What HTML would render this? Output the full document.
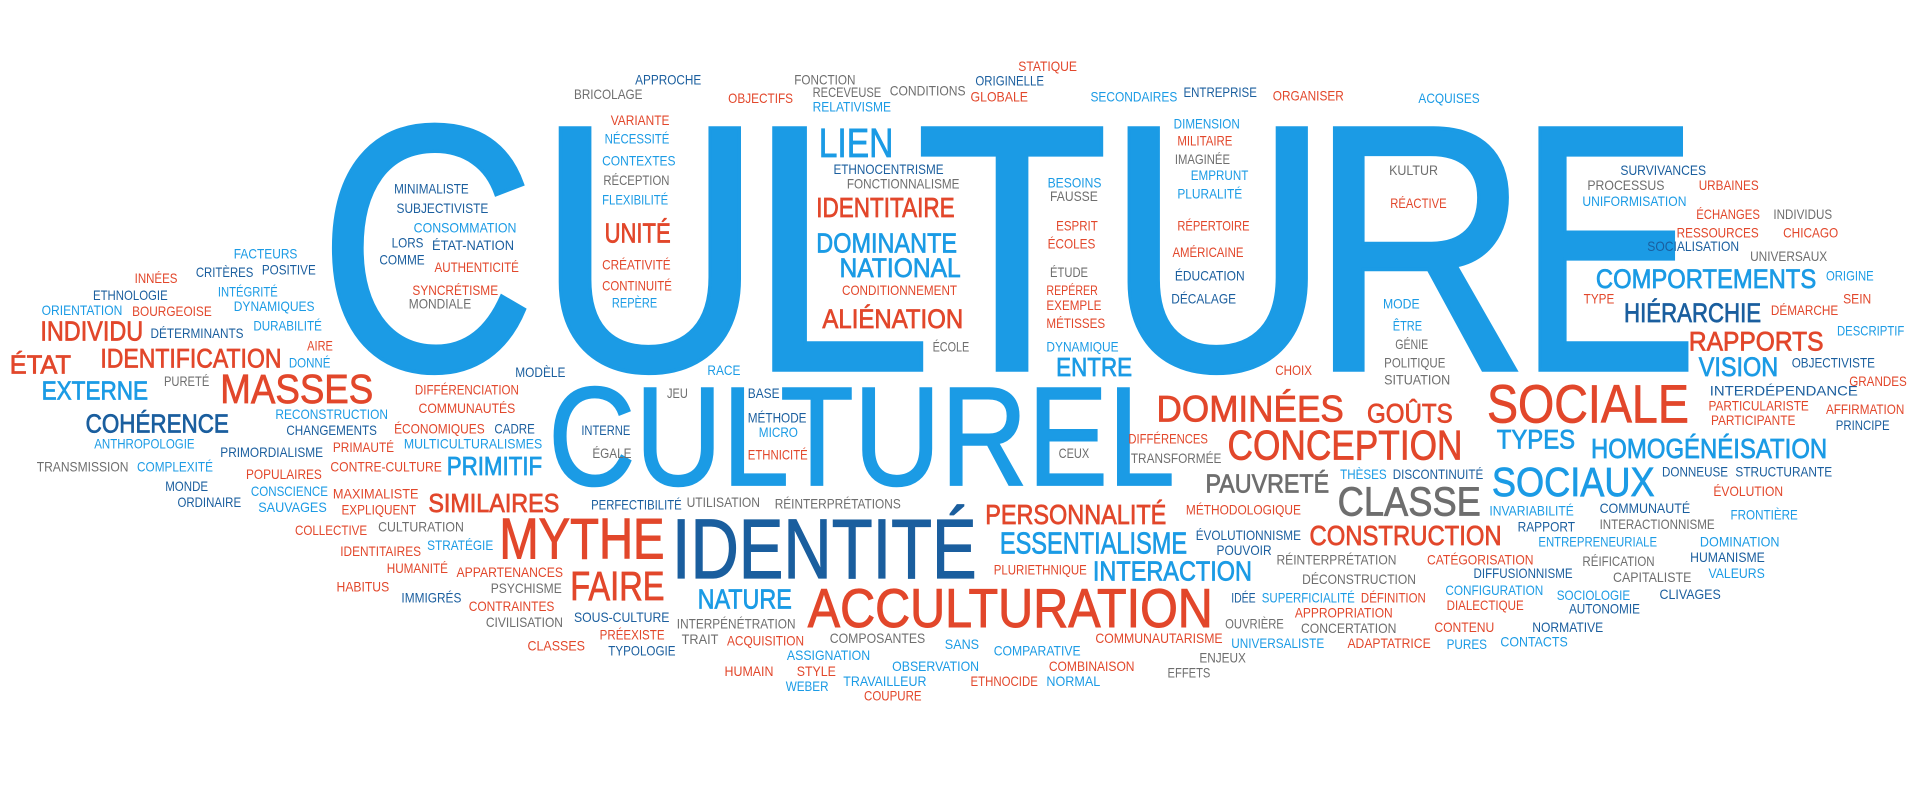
<!DOCTYPE html>
<html><head><meta charset="utf-8"><style>
html,body{margin:0;padding:0;background:#fff;width:1919px;height:790px;overflow:hidden}
svg{display:block}
text{font-family:"Liberation Sans",sans-serif;font-size:11.5px}
.b{fill:#1b9be5}.d{fill:#1a5e9e}.r{fill:#e2472b}.g{fill:#6e6e6e}
.m{stroke-width:.6px}.b.m{stroke:#1b9be5}.d.m{stroke:#1a5e9e}.r.m{stroke:#e2472b}.g.m{stroke:#6e6e6e}
.big{font-size:287px;stroke:#1b9be5;stroke-width:3px}
.cl{font-size:115px;stroke:#1b9be5;stroke-width:1.5px}
</style></head><body>
<svg width="1919" height="790" viewBox="0 0 1568 645" preserveAspectRatio="none">
<g>
<text class="b big" x="260" y="302" textLength="178" lengthAdjust="spacingAndGlyphs">C</text>
<text class="b big" x="438" y="302" textLength="186" lengthAdjust="spacingAndGlyphs">U</text>
<text class="b big" x="610" y="302" textLength="152" lengthAdjust="spacingAndGlyphs">L</text>
<text class="b big" x="748" y="302" textLength="158" lengthAdjust="spacingAndGlyphs">T</text>
<text class="b big" x="903" y="302" textLength="184" lengthAdjust="spacingAndGlyphs">U</text>
<text class="b big" x="1070" y="302" textLength="180" lengthAdjust="spacingAndGlyphs">R</text>
<text class="b big" x="1240" y="302" textLength="148" lengthAdjust="spacingAndGlyphs">E</text>
<text class="b cl" x="448" y="396" textLength="512" lengthAdjust="spacingAndGlyphs">CULTUREL</text>
<text class="d" x="549" y="472" style="font-size:69px;stroke:#1a5e9e;stroke-width:1px" textLength="249" lengthAdjust="spacingAndGlyphs">IDENTITÉ</text>
<text class="r" x="660" y="512" style="font-size:45px;stroke:#e2472b;stroke-width:.8px" textLength="331" lengthAdjust="spacingAndGlyphs">ACCULTURATION</text>
<text class="r" x="408" y="456" style="font-size:47px;stroke:#e2472b;stroke-width:.8px" textLength="135" lengthAdjust="spacingAndGlyphs">MYTHE</text>
<text class="r m" x="466" y="490" style="font-size:33px" textLength="77" lengthAdjust="spacingAndGlyphs">FAIRE</text>
<text class="r m" x="1215" y="345" style="font-size:44px" textLength="165" lengthAdjust="spacingAndGlyphs">SOCIALE</text>
<text class="r m" x="945" y="344" style="font-size:30px" textLength="153" lengthAdjust="spacingAndGlyphs">DOMINÉES</text>
<text class="r m" x="1117" y="345" style="font-size:22px" textLength="70" lengthAdjust="spacingAndGlyphs">GOÛTS</text>
<text class="r m" x="1003" y="375" style="font-size:34px" textLength="192" lengthAdjust="spacingAndGlyphs">CONCEPTION</text>
<text class="g m" x="1093" y="421" style="font-size:33px" textLength="117" lengthAdjust="spacingAndGlyphs">CLASSE</text>
<text class="b m" x="1219" y="405" style="font-size:33px" textLength="133" lengthAdjust="spacingAndGlyphs">SOCIAUX</text>
<text class="g m" x="985" y="402" style="font-size:21px" textLength="101" lengthAdjust="spacingAndGlyphs">PAUVRETÉ</text>
<text class="b m" x="1300" y="374" style="font-size:23px" textLength="193" lengthAdjust="spacingAndGlyphs">HOMOGÉNÉISATION</text>
<text class="b m" x="1223" y="366" style="font-size:22px" textLength="64" lengthAdjust="spacingAndGlyphs">TYPES</text>
<text class="r m" x="805" y="428" style="font-size:23px" textLength="148" lengthAdjust="spacingAndGlyphs">PERSONNALITÉ</text>
<text class="r m" x="1070" y="445" style="font-size:23px" textLength="157" lengthAdjust="spacingAndGlyphs">CONSTRUCTION</text>
<text class="b m" x="817" y="452" style="font-size:24.7px" textLength="153" lengthAdjust="spacingAndGlyphs">ESSENTIALISME</text>
<text class="b m" x="893" y="474" style="font-size:23px" textLength="130" lengthAdjust="spacingAndGlyphs">INTERACTION</text>
<text class="b m" x="570" y="497" style="font-size:23px" textLength="77" lengthAdjust="spacingAndGlyphs">NATURE</text>
<text class="r m" x="350" y="418" style="font-size:21px" textLength="107" lengthAdjust="spacingAndGlyphs">SIMILAIRES</text>
<text class="b m" x="365" y="388" style="font-size:21px" textLength="78" lengthAdjust="spacingAndGlyphs">PRIMITIF</text>
<text class="r m" x="180" y="329" style="font-size:33px" textLength="125" lengthAdjust="spacingAndGlyphs">MASSES</text>
<text class="d m" x="70" y="353" style="font-size:21px" textLength="117" lengthAdjust="spacingAndGlyphs">COHÉRENCE</text>
<text class="b m" x="34" y="326" style="font-size:21px" textLength="87" lengthAdjust="spacingAndGlyphs">EXTERNE</text>
<text class="r m" x="82" y="300" style="font-size:22px" textLength="148" lengthAdjust="spacingAndGlyphs">IDENTIFICATION</text>
<text class="r m" x="8" y="305" style="font-size:21px" textLength="50" lengthAdjust="spacingAndGlyphs">ÉTAT</text>
<text class="r m" x="33" y="278" style="font-size:23px" textLength="84" lengthAdjust="spacingAndGlyphs">INDIVIDU</text>
<text class="b m" x="863" y="307" style="font-size:21px" textLength="62" lengthAdjust="spacingAndGlyphs">ENTRE</text>
<text class="b m" x="1388" y="307" style="font-size:22px" textLength="65" lengthAdjust="spacingAndGlyphs">VISION</text>
<text class="r m" x="1380" y="286" style="font-size:22px" textLength="110" lengthAdjust="spacingAndGlyphs">RAPPORTS</text>
<text class="d m" x="1327" y="263" style="font-size:22px" textLength="112" lengthAdjust="spacingAndGlyphs">HIÉRARCHIE</text>
<text class="b m" x="1304" y="235" style="font-size:22px" textLength="180" lengthAdjust="spacingAndGlyphs">COMPORTEMENTS</text>
<text class="r m" x="672" y="268" style="font-size:22px" textLength="115" lengthAdjust="spacingAndGlyphs">ALIÉNATION</text>
<text class="b m" x="686" y="226" style="font-size:22px" textLength="99" lengthAdjust="spacingAndGlyphs">NATIONAL</text>
<text class="b m" x="667" y="206" style="font-size:23px" textLength="115" lengthAdjust="spacingAndGlyphs">DOMINANTE</text>
<text class="r m" x="494" y="198" style="font-size:23px" textLength="54" lengthAdjust="spacingAndGlyphs">UNITÉ</text>
<text class="r m" x="667" y="177" style="font-size:23px" textLength="113" lengthAdjust="spacingAndGlyphs">IDENTITAIRE</text>
<text class="b m" x="669" y="128" style="font-size:33px" textLength="61" lengthAdjust="spacingAndGlyphs">LIEN</text>
</g>
<g>
<text class="r" x="832" y="58" textLength="48" lengthAdjust="spacingAndGlyphs">STATIQUE</text>
<text class="d" x="519" y="69" textLength="54" lengthAdjust="spacingAndGlyphs">APPROCHE</text>
<text class="g" x="649" y="69" textLength="50" lengthAdjust="spacingAndGlyphs">FONCTION</text>
<text class="d" x="797" y="70" textLength="56" lengthAdjust="spacingAndGlyphs">ORIGINELLE</text>
<text class="g" x="469" y="81" textLength="56" lengthAdjust="spacingAndGlyphs">BRICOLAGE</text>
<text class="g" x="664" y="79" textLength="56" lengthAdjust="spacingAndGlyphs">RECEVEUSE</text>
<text class="g" x="727" y="78" textLength="62" lengthAdjust="spacingAndGlyphs">CONDITIONS</text>
<text class="r" x="595" y="84" textLength="53" lengthAdjust="spacingAndGlyphs">OBJECTIFS</text>
<text class="r" x="793" y="83" textLength="47" lengthAdjust="spacingAndGlyphs">GLOBALE</text>
<text class="b" x="891" y="83" textLength="71" lengthAdjust="spacingAndGlyphs">SECONDAIRES</text>
<text class="d" x="967" y="79" textLength="60" lengthAdjust="spacingAndGlyphs">ENTREPRISE</text>
<text class="r" x="1040" y="82" textLength="58" lengthAdjust="spacingAndGlyphs">ORGANISER</text>
<text class="b" x="1159" y="84" textLength="50" lengthAdjust="spacingAndGlyphs">ACQUISES</text>
<text class="b" x="664" y="91" textLength="64" lengthAdjust="spacingAndGlyphs">RELATIVISME</text>
<text class="r" x="499" y="102" textLength="48" lengthAdjust="spacingAndGlyphs">VARIANTE</text>
<text class="b" x="959" y="105" textLength="54" lengthAdjust="spacingAndGlyphs">DIMENSION</text>
<text class="b" x="494" y="117" textLength="53" lengthAdjust="spacingAndGlyphs">NÉCESSITÉ</text>
<text class="r" x="962" y="119" textLength="45" lengthAdjust="spacingAndGlyphs">MILITAIRE</text>
<text class="b" x="492" y="135" textLength="60" lengthAdjust="spacingAndGlyphs">CONTEXTES</text>
<text class="g" x="960" y="134" textLength="45" lengthAdjust="spacingAndGlyphs">IMAGINÉE</text>
<text class="d" x="681" y="142" textLength="90" lengthAdjust="spacingAndGlyphs">ETHNOCENTRISME</text>
<text class="g" x="1135" y="143" textLength="40" lengthAdjust="spacingAndGlyphs">KULTUR</text>
<text class="d" x="1324" y="143" textLength="70" lengthAdjust="spacingAndGlyphs">SURVIVANCES</text>
<text class="b" x="973" y="147" textLength="47" lengthAdjust="spacingAndGlyphs">EMPRUNT</text>
<text class="g" x="493" y="151" textLength="54" lengthAdjust="spacingAndGlyphs">RÉCEPTION</text>
<text class="g" x="692" y="154" textLength="92" lengthAdjust="spacingAndGlyphs">FONCTIONNALISME</text>
<text class="b" x="856" y="153" textLength="44" lengthAdjust="spacingAndGlyphs">BESOINS</text>
<text class="g" x="1297" y="155" textLength="63" lengthAdjust="spacingAndGlyphs">PROCESSUS</text>
<text class="r" x="1388" y="155" textLength="49" lengthAdjust="spacingAndGlyphs">URBAINES</text>
<text class="d" x="322" y="158" textLength="61" lengthAdjust="spacingAndGlyphs">MINIMALISTE</text>
<text class="g" x="858" y="164" textLength="39" lengthAdjust="spacingAndGlyphs">FAUSSE</text>
<text class="b" x="962" y="162" textLength="53" lengthAdjust="spacingAndGlyphs">PLURALITÉ</text>
<text class="b" x="492" y="167" textLength="54" lengthAdjust="spacingAndGlyphs">FLEXIBILITÉ</text>
<text class="b" x="1293" y="168" textLength="85" lengthAdjust="spacingAndGlyphs">UNIFORMISATION</text>
<text class="r" x="1136" y="170" textLength="46" lengthAdjust="spacingAndGlyphs">RÉACTIVE</text>
<text class="d" x="324" y="174" textLength="75" lengthAdjust="spacingAndGlyphs">SUBJECTIVISTE</text>
<text class="g" x="1449" y="179" textLength="48" lengthAdjust="spacingAndGlyphs">INDIVIDUS</text>
<text class="r" x="1386" y="179" textLength="52" lengthAdjust="spacingAndGlyphs">ÉCHANGES</text>
<text class="r" x="863" y="188" textLength="34" lengthAdjust="spacingAndGlyphs">ESPRIT</text>
<text class="r" x="962" y="188" textLength="59" lengthAdjust="spacingAndGlyphs">RÉPERTOIRE</text>
<text class="b" x="338" y="190" textLength="84" lengthAdjust="spacingAndGlyphs">CONSOMMATION</text>
<text class="r" x="1370" y="194" textLength="67" lengthAdjust="spacingAndGlyphs">RESSOURCES</text>
<text class="r" x="1457" y="194" textLength="45" lengthAdjust="spacingAndGlyphs">CHICAGO</text>
<text class="d" x="320" y="202" textLength="26" lengthAdjust="spacingAndGlyphs">LORS</text>
<text class="d" x="353" y="204" textLength="67" lengthAdjust="spacingAndGlyphs">ÉTAT-NATION</text>
<text class="r" x="856" y="203" textLength="39" lengthAdjust="spacingAndGlyphs">ÉCOLES</text>
<text class="d" x="1346" y="205" textLength="75" lengthAdjust="spacingAndGlyphs">SOCIALISATION</text>
<text class="r" x="958" y="210" textLength="58" lengthAdjust="spacingAndGlyphs">AMÉRICAINE</text>
<text class="b" x="191" y="211" textLength="52" lengthAdjust="spacingAndGlyphs">FACTEURS</text>
<text class="g" x="1430" y="213" textLength="63" lengthAdjust="spacingAndGlyphs">UNIVERSAUX</text>
<text class="r" x="492" y="220" textLength="56" lengthAdjust="spacingAndGlyphs">CRÉATIVITÉ</text>
<text class="d" x="310" y="216" textLength="37" lengthAdjust="spacingAndGlyphs">COMME</text>
<text class="r" x="110" y="231" textLength="35" lengthAdjust="spacingAndGlyphs">INNÉES</text>
<text class="d" x="160" y="226" textLength="47" lengthAdjust="spacingAndGlyphs">CRITÈRES</text>
<text class="d" x="214" y="224" textLength="44" lengthAdjust="spacingAndGlyphs">POSITIVE</text>
<text class="r" x="355" y="222" textLength="69" lengthAdjust="spacingAndGlyphs">AUTHENTICITÉ</text>
<text class="g" x="858" y="226" textLength="31" lengthAdjust="spacingAndGlyphs">ÉTUDE</text>
<text class="b" x="1492" y="229" textLength="39" lengthAdjust="spacingAndGlyphs">ORIGINE</text>
<text class="r" x="492" y="237" textLength="57" lengthAdjust="spacingAndGlyphs">CONTINUITÉ</text>
<text class="d" x="960" y="229" textLength="57" lengthAdjust="spacingAndGlyphs">ÉDUCATION</text>
<text class="b" x="178" y="242" textLength="49" lengthAdjust="spacingAndGlyphs">INTÉGRITÉ</text>
<text class="r" x="688" y="241" textLength="94" lengthAdjust="spacingAndGlyphs">CONDITIONNEMENT</text>
<text class="r" x="855" y="241" textLength="42" lengthAdjust="spacingAndGlyphs">REPÉRER</text>
<text class="d" x="76" y="245" textLength="61" lengthAdjust="spacingAndGlyphs">ETHNOLOGIE</text>
<text class="r" x="337" y="241" textLength="70" lengthAdjust="spacingAndGlyphs">SYNCRÉTISME</text>
<text class="d" x="957" y="248" textLength="53" lengthAdjust="spacingAndGlyphs">DÉCALAGE</text>
<text class="b" x="1130" y="252" textLength="30" lengthAdjust="spacingAndGlyphs">MODE</text>
<text class="b" x="500" y="251" textLength="37" lengthAdjust="spacingAndGlyphs">REPÈRE</text>
<text class="r" x="855" y="253" textLength="45" lengthAdjust="spacingAndGlyphs">EXEMPLE</text>
<text class="b" x="34" y="257" textLength="66" lengthAdjust="spacingAndGlyphs">ORIENTATION</text>
<text class="r" x="108" y="258" textLength="65" lengthAdjust="spacingAndGlyphs">BOURGEOISE</text>
<text class="b" x="191" y="254" textLength="66" lengthAdjust="spacingAndGlyphs">DYNAMIQUES</text>
<text class="g" x="334" y="252" textLength="51" lengthAdjust="spacingAndGlyphs">MONDIALE</text>
<text class="r" x="1294" y="248" textLength="25" lengthAdjust="spacingAndGlyphs">TYPE</text>
<text class="r" x="1506" y="248" textLength="23" lengthAdjust="spacingAndGlyphs">SEIN</text>
<text class="r" x="1447" y="257" textLength="55" lengthAdjust="spacingAndGlyphs">DÉMARCHE</text>
<text class="b" x="1138" y="270" textLength="24" lengthAdjust="spacingAndGlyphs">ÊTRE</text>
<text class="r" x="855" y="268" textLength="48" lengthAdjust="spacingAndGlyphs">MÉTISSES</text>
<text class="b" x="207" y="270" textLength="56" lengthAdjust="spacingAndGlyphs">DURABILITÉ</text>
<text class="d" x="123" y="276" textLength="76" lengthAdjust="spacingAndGlyphs">DÉTERMINANTS</text>
<text class="b" x="1501" y="274" textLength="55" lengthAdjust="spacingAndGlyphs">DESCRIPTIF</text>
<text class="g" x="1140" y="285" textLength="27" lengthAdjust="spacingAndGlyphs">GÉNIE</text>
<text class="r" x="251" y="286" textLength="21" lengthAdjust="spacingAndGlyphs">AIRE</text>
<text class="g" x="762" y="287" textLength="30" lengthAdjust="spacingAndGlyphs">ÉCOLE</text>
<text class="b" x="855" y="287" textLength="59" lengthAdjust="spacingAndGlyphs">DYNAMIQUE</text>
<text class="b" x="236" y="300" textLength="34" lengthAdjust="spacingAndGlyphs">DONNÉ</text>
<text class="g" x="1131" y="300" textLength="50" lengthAdjust="spacingAndGlyphs">POLITIQUE</text>
<text class="d" x="1464" y="300" textLength="68" lengthAdjust="spacingAndGlyphs">OBJECTIVISTE</text>
<text class="b" x="578" y="306" textLength="27" lengthAdjust="spacingAndGlyphs">RACE</text>
<text class="d" x="421" y="308" textLength="41" lengthAdjust="spacingAndGlyphs">MODÈLE</text>
<text class="r" x="1042" y="306" textLength="30" lengthAdjust="spacingAndGlyphs">CHOIX</text>
<text class="g" x="1131" y="314" textLength="54" lengthAdjust="spacingAndGlyphs">SITUATION</text>
<text class="g" x="134" y="315" textLength="37" lengthAdjust="spacingAndGlyphs">PURETÉ</text>
<text class="g" x="545" y="325" textLength="17" lengthAdjust="spacingAndGlyphs">JEU</text>
<text class="d" x="611" y="325" textLength="26" lengthAdjust="spacingAndGlyphs">BASE</text>
<text class="r" x="1511" y="315" textLength="47" lengthAdjust="spacingAndGlyphs">GRANDES</text>
<text class="r" x="339" y="322" textLength="85" lengthAdjust="spacingAndGlyphs">DIFFÉRENCIATION</text>
<text class="d" x="1397" y="323" textLength="121" lengthAdjust="spacingAndGlyphs">INTERDÉPENDANCE</text>
<text class="r" x="342" y="337" textLength="79" lengthAdjust="spacingAndGlyphs">COMMUNAUTÉS</text>
<text class="r" x="1396" y="335" textLength="82" lengthAdjust="spacingAndGlyphs">PARTICULARISTE</text>
<text class="r" x="1492" y="338" textLength="64" lengthAdjust="spacingAndGlyphs">AFFIRMATION</text>
<text class="b" x="225" y="342" textLength="92" lengthAdjust="spacingAndGlyphs">RECONSTRUCTION</text>
<text class="d" x="611" y="345" textLength="48" lengthAdjust="spacingAndGlyphs">MÉTHODE</text>
<text class="r" x="1398" y="347" textLength="69" lengthAdjust="spacingAndGlyphs">PARTICIPANTE</text>
<text class="d" x="475" y="355" textLength="40" lengthAdjust="spacingAndGlyphs">INTERNE</text>
<text class="d" x="234" y="355" textLength="74" lengthAdjust="spacingAndGlyphs">CHANGEMENTS</text>
<text class="r" x="322" y="354" textLength="74" lengthAdjust="spacingAndGlyphs">ÉCONOMIQUES</text>
<text class="d" x="404" y="354" textLength="33" lengthAdjust="spacingAndGlyphs">CADRE</text>
<text class="b" x="620" y="357" textLength="32" lengthAdjust="spacingAndGlyphs">MICRO</text>
<text class="d" x="1500" y="351" textLength="44" lengthAdjust="spacingAndGlyphs">PRINCIPE</text>
<text class="b" x="77" y="366" textLength="82" lengthAdjust="spacingAndGlyphs">ANTHROPOLOGIE</text>
<text class="r" x="922" y="362" textLength="65" lengthAdjust="spacingAndGlyphs">DIFFÉRENCES</text>
<text class="d" x="180" y="373" textLength="84" lengthAdjust="spacingAndGlyphs">PRIMORDIALISME</text>
<text class="r" x="272" y="369" textLength="50" lengthAdjust="spacingAndGlyphs">PRIMAUTÉ</text>
<text class="b" x="330" y="366" textLength="113" lengthAdjust="spacingAndGlyphs">MULTICULTURALISMES</text>
<text class="g" x="484" y="374" textLength="32" lengthAdjust="spacingAndGlyphs">ÉGALE</text>
<text class="g" x="865" y="374" textLength="25" lengthAdjust="spacingAndGlyphs">CEUX</text>
<text class="r" x="611" y="375" textLength="49" lengthAdjust="spacingAndGlyphs">ETHNICITÉ</text>
<text class="g" x="924" y="378" textLength="74" lengthAdjust="spacingAndGlyphs">TRANSFORMÉE</text>
<text class="g" x="30" y="385" textLength="75" lengthAdjust="spacingAndGlyphs">TRANSMISSION</text>
<text class="b" x="112" y="385" textLength="62" lengthAdjust="spacingAndGlyphs">COMPLEXITÉ</text>
<text class="r" x="270" y="385" textLength="91" lengthAdjust="spacingAndGlyphs">CONTRE-CULTURE</text>
<text class="r" x="201" y="391" textLength="62" lengthAdjust="spacingAndGlyphs">POPULAIRES</text>
<text class="b" x="1095" y="391" textLength="38" lengthAdjust="spacingAndGlyphs">THÈSES</text>
<text class="d" x="1138" y="391" textLength="74" lengthAdjust="spacingAndGlyphs">DISCONTINUITÉ</text>
<text class="d" x="1358" y="389" textLength="54" lengthAdjust="spacingAndGlyphs">DONNEUSE</text>
<text class="d" x="1418" y="389" textLength="79" lengthAdjust="spacingAndGlyphs">STRUCTURANTE</text>
<text class="d" x="135" y="401" textLength="35" lengthAdjust="spacingAndGlyphs">MONDE</text>
<text class="b" x="205" y="405" textLength="63" lengthAdjust="spacingAndGlyphs">CONSCIENCE</text>
<text class="r" x="272" y="407" textLength="70" lengthAdjust="spacingAndGlyphs">MAXIMALISTE</text>
<text class="r" x="1400" y="405" textLength="57" lengthAdjust="spacingAndGlyphs">ÉVOLUTION</text>
<text class="d" x="145" y="414" textLength="52" lengthAdjust="spacingAndGlyphs">ORDINAIRE</text>
<text class="b" x="211" y="418" textLength="56" lengthAdjust="spacingAndGlyphs">SAUVAGES</text>
<text class="r" x="279" y="420" textLength="61" lengthAdjust="spacingAndGlyphs">EXPLIQUENT</text>
<text class="d" x="483" y="416" textLength="74" lengthAdjust="spacingAndGlyphs">PERFECTIBILITÉ</text>
<text class="g" x="561" y="414" textLength="60" lengthAdjust="spacingAndGlyphs">UTILISATION</text>
<text class="g" x="633" y="415" textLength="103" lengthAdjust="spacingAndGlyphs">RÉINTERPRÉTATIONS</text>
<text class="r" x="969" y="420" textLength="94" lengthAdjust="spacingAndGlyphs">MÉTHODOLOGIQUE</text>
<text class="b" x="1217" y="421" textLength="69" lengthAdjust="spacingAndGlyphs">INVARIABILITÉ</text>
<text class="d" x="1307" y="419" textLength="74" lengthAdjust="spacingAndGlyphs">COMMUNAUTÉ</text>
<text class="b" x="1414" y="424" textLength="55" lengthAdjust="spacingAndGlyphs">FRONTIÈRE</text>
<text class="g" x="1307" y="432" textLength="94" lengthAdjust="spacingAndGlyphs">INTERACTIONNISME</text>
<text class="d" x="1240" y="434" textLength="47" lengthAdjust="spacingAndGlyphs">RAPPORT</text>
<text class="r" x="241" y="437" textLength="59" lengthAdjust="spacingAndGlyphs">COLLECTIVE</text>
<text class="g" x="309" y="434" textLength="70" lengthAdjust="spacingAndGlyphs">CULTURATION</text>
<text class="d" x="977" y="441" textLength="86" lengthAdjust="spacingAndGlyphs">ÉVOLUTIONNISME</text>
<text class="b" x="349" y="449" textLength="54" lengthAdjust="spacingAndGlyphs">STRATÉGIE</text>
<text class="b" x="1257" y="446" textLength="97" lengthAdjust="spacingAndGlyphs">ENTREPRENEURIALE</text>
<text class="b" x="1389" y="446" textLength="65" lengthAdjust="spacingAndGlyphs">DOMINATION</text>
<text class="r" x="278" y="454" textLength="66" lengthAdjust="spacingAndGlyphs">IDENTITAIRES</text>
<text class="d" x="994" y="453" textLength="45" lengthAdjust="spacingAndGlyphs">POUVOIR</text>
<text class="g" x="1043" y="461" textLength="98" lengthAdjust="spacingAndGlyphs">RÉINTERPRÉTATION</text>
<text class="r" x="1166" y="461" textLength="87" lengthAdjust="spacingAndGlyphs">CATÉGORISATION</text>
<text class="g" x="1293" y="462" textLength="59" lengthAdjust="spacingAndGlyphs">RÉIFICATION</text>
<text class="d" x="1381" y="459" textLength="61" lengthAdjust="spacingAndGlyphs">HUMANISME</text>
<text class="r" x="316" y="468" textLength="50" lengthAdjust="spacingAndGlyphs">HUMANITÉ</text>
<text class="r" x="373" y="471" textLength="87" lengthAdjust="spacingAndGlyphs">APPARTENANCES</text>
<text class="r" x="812" y="469" textLength="76" lengthAdjust="spacingAndGlyphs">PLURIETHNIQUE</text>
<text class="d" x="1204" y="472" textLength="81" lengthAdjust="spacingAndGlyphs">DIFFUSIONNISME</text>
<text class="g" x="1318" y="475" textLength="64" lengthAdjust="spacingAndGlyphs">CAPITALISTE</text>
<text class="b" x="1396" y="472" textLength="46" lengthAdjust="spacingAndGlyphs">VALEURS</text>
<text class="g" x="1064" y="477" textLength="93" lengthAdjust="spacingAndGlyphs">DÉCONSTRUCTION</text>
<text class="r" x="275" y="483" textLength="43" lengthAdjust="spacingAndGlyphs">HABITUS</text>
<text class="g" x="401" y="484" textLength="58" lengthAdjust="spacingAndGlyphs">PSYCHISME</text>
<text class="d" x="328" y="492" textLength="49" lengthAdjust="spacingAndGlyphs">IMMIGRÉS</text>
<text class="b" x="1181" y="486" textLength="80" lengthAdjust="spacingAndGlyphs">CONFIGURATION</text>
<text class="b" x="1272" y="490" textLength="60" lengthAdjust="spacingAndGlyphs">SOCIOLOGIE</text>
<text class="d" x="1356" y="489" textLength="50" lengthAdjust="spacingAndGlyphs">CLIVAGES</text>
<text class="d" x="1006" y="492" textLength="20" lengthAdjust="spacingAndGlyphs">IDÉE</text>
<text class="b" x="1031" y="492" textLength="76" lengthAdjust="spacingAndGlyphs">SUPERFICIALITÉ</text>
<text class="r" x="1112" y="492" textLength="53" lengthAdjust="spacingAndGlyphs">DÉFINITION</text>
<text class="r" x="1182" y="498" textLength="63" lengthAdjust="spacingAndGlyphs">DIALECTIQUE</text>
<text class="r" x="383" y="499" textLength="70" lengthAdjust="spacingAndGlyphs">CONTRAINTES</text>
<text class="r" x="1058" y="504" textLength="80" lengthAdjust="spacingAndGlyphs">APPROPRIATION</text>
<text class="d" x="1282" y="501" textLength="58" lengthAdjust="spacingAndGlyphs">AUTONOMIE</text>
<text class="g" x="397" y="512" textLength="63" lengthAdjust="spacingAndGlyphs">CIVILISATION</text>
<text class="d" x="469" y="508" textLength="78" lengthAdjust="spacingAndGlyphs">SOUS-CULTURE</text>
<text class="g" x="553" y="513" textLength="97" lengthAdjust="spacingAndGlyphs">INTERPÉNÉTRATION</text>
<text class="g" x="1001" y="513" textLength="48" lengthAdjust="spacingAndGlyphs">OUVRIÈRE</text>
<text class="g" x="1063" y="517" textLength="78" lengthAdjust="spacingAndGlyphs">CONCERTATION</text>
<text class="r" x="1172" y="516" textLength="49" lengthAdjust="spacingAndGlyphs">CONTENU</text>
<text class="d" x="1252" y="516" textLength="58" lengthAdjust="spacingAndGlyphs">NORMATIVE</text>
<text class="r" x="490" y="522" textLength="53" lengthAdjust="spacingAndGlyphs">PRÉEXISTE</text>
<text class="g" x="557" y="526" textLength="30" lengthAdjust="spacingAndGlyphs">TRAIT</text>
<text class="r" x="594" y="527" textLength="63" lengthAdjust="spacingAndGlyphs">ACQUISITION</text>
<text class="g" x="678" y="525" textLength="78" lengthAdjust="spacingAndGlyphs">COMPOSANTES</text>
<text class="b" x="772" y="530" textLength="28" lengthAdjust="spacingAndGlyphs">SANS</text>
<text class="r" x="895" y="525" textLength="104" lengthAdjust="spacingAndGlyphs">COMMUNAUTARISME</text>
<text class="b" x="1006" y="529" textLength="76" lengthAdjust="spacingAndGlyphs">UNIVERSALISTE</text>
<text class="r" x="1101" y="529" textLength="68" lengthAdjust="spacingAndGlyphs">ADAPTATRICE</text>
<text class="b" x="1182" y="530" textLength="33" lengthAdjust="spacingAndGlyphs">PURES</text>
<text class="b" x="1226" y="528" textLength="55" lengthAdjust="spacingAndGlyphs">CONTACTS</text>
<text class="r" x="431" y="531" textLength="47" lengthAdjust="spacingAndGlyphs">CLASSES</text>
<text class="d" x="497" y="535" textLength="55" lengthAdjust="spacingAndGlyphs">TYPOLOGIE</text>
<text class="b" x="812" y="535" textLength="71" lengthAdjust="spacingAndGlyphs">COMPARATIVE</text>
<text class="b" x="643" y="539" textLength="68" lengthAdjust="spacingAndGlyphs">ASSIGNATION</text>
<text class="g" x="980" y="541" textLength="38" lengthAdjust="spacingAndGlyphs">ENJEUX</text>
<text class="b" x="729" y="548" textLength="71" lengthAdjust="spacingAndGlyphs">OBSERVATION</text>
<text class="r" x="857" y="548" textLength="70" lengthAdjust="spacingAndGlyphs">COMBINAISON</text>
<text class="r" x="592" y="552" textLength="40" lengthAdjust="spacingAndGlyphs">HUMAIN</text>
<text class="r" x="651" y="552" textLength="32" lengthAdjust="spacingAndGlyphs">STYLE</text>
<text class="g" x="954" y="553" textLength="35" lengthAdjust="spacingAndGlyphs">EFFETS</text>
<text class="b" x="642" y="564" textLength="35" lengthAdjust="spacingAndGlyphs">WEBER</text>
<text class="b" x="689" y="560" textLength="68" lengthAdjust="spacingAndGlyphs">TRAVAILLEUR</text>
<text class="r" x="793" y="560" textLength="55" lengthAdjust="spacingAndGlyphs">ETHNOCIDE</text>
<text class="b" x="855" y="560" textLength="44" lengthAdjust="spacingAndGlyphs">NORMAL</text>
<text class="r" x="706" y="572" textLength="47" lengthAdjust="spacingAndGlyphs">COUPURE</text>
</g>
</svg>
</body></html>
